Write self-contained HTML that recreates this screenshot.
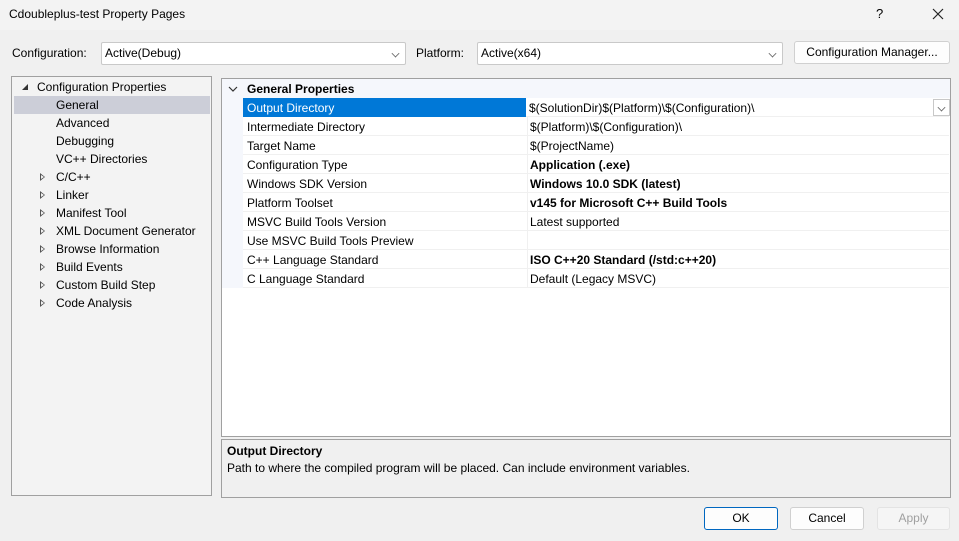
<!DOCTYPE html>
<html><head><meta charset="utf-8"><style>
*{box-sizing:border-box;margin:0;padding:0}
body{width:959px;height:541px;background:#f0f0f0;font-family:"Liberation Sans",sans-serif;font-size:12px;color:#000;position:relative;overflow:hidden}
.a{position:absolute}
.title{left:0;top:0;width:959px;height:30px;background:#f3f3f3}
.combo{background:#fff;border:1px solid #c9c9c9;border-radius:2px;height:23px;line-height:21px;padding-left:3px}
.chev{position:absolute;right:6px;top:7px;width:7px;height:7px;border-right:1px solid #666;border-bottom:1px solid #666;transform:rotate(45deg) scale(.8)}
.btn{background:#fdfdfd;border:1px solid #d0d0d0;border-radius:3px;text-align:center;line-height:21px;height:23px}
.tree{left:11px;top:76px;width:201px;height:420px;background:#f3f3f3;border:1px solid #a0a0a0}
.ti{position:absolute;height:18px;line-height:18px;white-space:nowrap}
.tri{position:absolute;left:-16px;top:5px;width:0;height:0}
.tri.c{border-left:5px solid #555;border-top:4px solid transparent;border-bottom:4px solid transparent}
.tri.c::after{content:"";position:absolute;left:-4px;top:-2px;border-left:3px solid #f3f3f3;border-top:2px solid transparent;border-bottom:2px solid transparent}
.grid{left:221px;top:78px;width:730px;height:359px;background:#fff;border:1px solid #a0a0a0}
.row{position:absolute;left:21px;width:706px;height:19px;line-height:20px;border-bottom:1px solid #f0f0f0}
.row .n{position:absolute;left:4px}
.row .v{position:absolute;left:284px;top:0;height:19px;border-left:1px solid #f0f0f0;padding-left:2px;width:422px}
.b{font-weight:bold}
.desc{left:221px;top:439px;width:730px;height:59px;background:#f0f0f0;border:1px solid #a0a0a0}
</style></head><body>
<div class="a title"></div>
<div class="a" style="left:9px;top:7px;font-size:12px">Cdoubleplus-test Property Pages</div>
<div class="a" style="left:876px;top:6px;font-size:13px">?</div>
<svg class="a" style="left:932px;top:8px" width="12" height="12"><path d="M1 1L11 11M11 1L1 11" stroke="#222" stroke-width="1.2"/></svg>

<div class="a" style="left:12px;top:46px">Configuration:</div>
<div class="a combo" style="left:101px;top:42px;width:305px">Active(Debug)<span class="chev"></span></div>
<div class="a" style="left:416px;top:46px">Platform:</div>
<div class="a combo" style="left:477px;top:42px;width:306px">Active(x64)<span class="chev"></span></div>
<div class="a btn" style="left:794px;top:41px;width:156px">Configuration Manager...</div>

<div class="a tree">
 <div class="ti" style="left:25px;top:1px"><span style="position:absolute;left:-15px;top:6px;width:0;height:0;border-right:6px solid #333;border-top:6px solid transparent"></span>Configuration Properties</div>
 <div class="a" style="left:2px;top:19px;width:196px;height:18px;background:#ccced8"></div>
 <div class="ti" style="left:44px;top:19px">General</div>
 <div class="ti" style="left:44px;top:37px">Advanced</div>
 <div class="ti" style="left:44px;top:55px">Debugging</div>
 <div class="ti" style="left:44px;top:73px">VC++ Directories</div>
 <div class="ti" style="left:44px;top:91px"><span class="tri c"></span>C/C++</div>
 <div class="ti" style="left:44px;top:109px"><span class="tri c"></span>Linker</div>
 <div class="ti" style="left:44px;top:127px"><span class="tri c"></span>Manifest Tool</div>
 <div class="ti" style="left:44px;top:145px"><span class="tri c"></span>XML Document Generator</div>
 <div class="ti" style="left:44px;top:163px"><span class="tri c"></span>Browse Information</div>
 <div class="ti" style="left:44px;top:181px"><span class="tri c"></span>Build Events</div>
 <div class="ti" style="left:44px;top:199px"><span class="tri c"></span>Custom Build Step</div>
 <div class="ti" style="left:44px;top:217px"><span class="tri c"></span>Code Analysis</div>
</div>

<div class="a grid">
 <div class="a" style="left:0;top:0;width:728px;height:19px;background:#f5f7fc"></div>
 <div class="a" style="left:0;top:19px;width:21px;height:190px;background:#f5f7fc"></div>
 <svg class="a" style="left:6px;top:6px" width="10" height="8"><path d="M1 2L5 6L9 2" stroke="#333" fill="none" stroke-width="1.2"/></svg>
 <div class="a b" style="left:25px;top:0;line-height:20px">General Properties</div>
 <div class="row" style="top:19px"><div class="a" style="left:0;top:0;width:283px;height:19px;background:#0078d7"></div><span class="n" style="color:#fff">Output Directory</span><span class="v" style="border-left:none">$(SolutionDir)$(Platform)\$(Configuration)\</span>
  <div class="a" style="left:690px;top:1px;width:17px;height:17px;border:1px solid #c8c8c8;background:#fff"><span class="chev" style="right:4px;top:4px"></span></div></div>
 <div class="row" style="top:38px"><span class="n">Intermediate Directory</span><span class="v">$(Platform)\$(Configuration)\</span></div>
 <div class="row" style="top:57px"><span class="n">Target Name</span><span class="v">$(ProjectName)</span></div>
 <div class="row" style="top:76px"><span class="n">Configuration Type</span><span class="v b">Application (.exe)</span></div>
 <div class="row" style="top:95px"><span class="n">Windows SDK Version</span><span class="v b">Windows 10.0 SDK (latest)</span></div>
 <div class="row" style="top:114px"><span class="n">Platform Toolset</span><span class="v b">v145 for Microsoft C++ Build Tools</span></div>
 <div class="row" style="top:133px"><span class="n">MSVC Build Tools Version</span><span class="v">Latest supported</span></div>
 <div class="row" style="top:152px"><span class="n">Use MSVC Build Tools Preview</span><span class="v"></span></div>
 <div class="row" style="top:171px"><span class="n">C++ Language Standard</span><span class="v b">ISO C++20 Standard (/std:c++20)</span></div>
 <div class="row" style="top:190px"><span class="n">C Language Standard</span><span class="v">Default (Legacy MSVC)</span></div>
</div>

<div class="a desc">
 <div class="a b" style="left:5px;top:4px">Output Directory</div>
 <div class="a" style="left:5px;top:21px">Path to where the compiled program will be placed. Can include environment variables.</div>
</div>

<div class="a btn" style="left:704px;top:507px;width:74px;border:1px solid #0067c0">OK</div>
<div class="a btn" style="left:790px;top:507px;width:74px">Cancel</div>
<div class="a btn" style="left:877px;top:507px;width:73px;color:#a0a0a0;border-color:#e3e3e3;background:#f5f5f5">Apply</div>
</body></html>
